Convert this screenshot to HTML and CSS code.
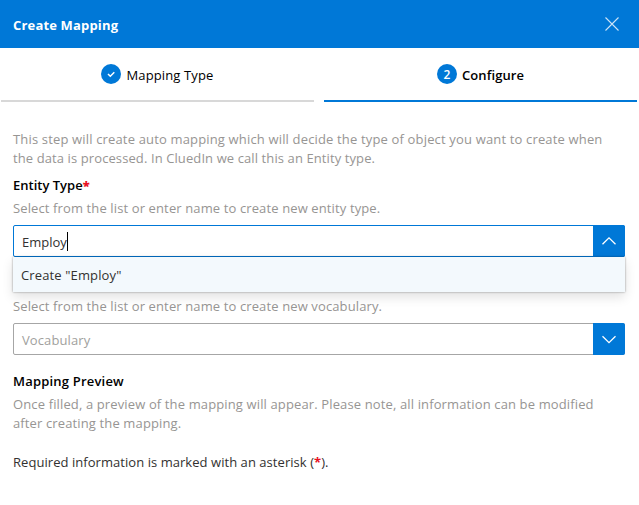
FILE: index.html
```html
<!DOCTYPE html>
<html lang="en">
<head>
<meta charset="utf-8">
<title>Create Mapping</title>
<link rel="stylesheet" href="styles.css">
</head>
<body>
<header class="header">
  <h1 class="title">Create Mapping</h1>
  <svg class="close" width="16" height="16" viewBox="0 0 16 16"><path d="M1.5 1.5l13 13M14.5 1.5l-13 13"/></svg>
</header>
<nav class="steps">
  <div class="step">
    <span class="badge"><svg width="20" height="20" viewBox="0 0 20 20"><path d="M7 10l2.3 2.3L13.300 8.300"/></svg></span>
    <span class="step-one">Mapping Type</span>
  </div>
  <div class="step active">
    <span class="badge">2</span>
    <span class="step-two">Configure</span>
  </div>
</nav>
<main class="content">
  <p class="hint intro"><span class="i1">This step will create auto mapping which will decide the type of object you want to create when</span><br><span class="i2">the data is processed. In CluedIn we call this an Entity type.</span></p>
  <section class="field entity">
    <h2 class="label">Entity Type<b class="star">*</b></h2>
    <p class="hint"><span class="sel">Select from the list or enter name to create new entity type.</span></p>
    <div class="combo open">
      <div class="input"><span class="typed">Employ</span><i class="caret"></i></div>
      <div class="toggle"><svg width="16" height="16" viewBox="0 0 16 16"><path d="M1.500 11.300L8 4.800l6.500 6.500"/></svg></div>
      <div class="menu"><span class="option">Create "Employ"</span></div>
    </div>
  </section>
  <section class="field vocabulary">
    <p class="hint"><span class="sel">Select from the list or enter name to create new vocabulary.</span></p>
    <div class="combo">
      <div class="input"><span class="placeholder">Vocabulary</span></div>
      <div class="toggle"><svg width="16" height="16" viewBox="0 0 16 16"><path d="M1.500 5.200L8 11.700l6.500-6.500"/></svg></div>
    </div>
  </section>
  <section class="preview">
    <h2 class="label preview-label">Mapping Preview</h2>
    <p class="hint"><span class="o1">Once filled, a preview of the mapping will appear. Please note, all information can be modified</span><br><span class="o2">after creating the mapping.</span></p>
  </section>
  <p class="required">Required information is marked with an asterisk (<b class="star">*</b>).</p>
</main>
</body>
</html>
```

FILE: styles.css
```css
* { box-sizing: border-box; }
body {
  margin: 0;
  background: #fff;
  color: #323130;
  font: 13px/19px "Open Sans", "Noto Sans", sans-serif;
  white-space: nowrap;
}
h1, h2, p { margin: 0; font-size: 13px; }
svg { display: block; fill: none; stroke: #fff; stroke-width: 1.3; }
.header {
  display: flex;
  align-items: center;
  justify-content: space-between;
  height: 48px;
  padding: 0 19px 0 13px;
  background: #0078d7;
}
.title { padding-top: 2px; color: #fff; font-weight: 700; letter-spacing: .17px; }
.close { stroke-width: 1.1; opacity: .8; }
.steps { display: flex; gap: 10px; padding: 0 2px 0 1px; }
.step {
  display: flex;
  align-items: flex-start;
  justify-content: center;
  gap: 5px;
  width: 313px;
  height: 54px;
  padding-top: 16px;
  border-bottom: 2px solid #d8d8d8;
  color: #000;
}
.step.active { border-color: #0078d7; font-weight: 600; }
.step > span:last-child { padding-top: 2px; }
.step-one { letter-spacing: .14px; }
.step-two { letter-spacing: .08px; }
.badge {
  width: 20px;
  height: 20px;
  border-radius: 50%;
  background: #0078d7;
  color: #fff;
  font-size: 12px;
  line-height: 22px;
  text-align: center;
}
.badge svg { stroke-width: 1.5; }
.content { padding: 28px 14px 0 13px; }
.hint { color: #979593; }
.i1 { letter-spacing: .16px; }
.i2 { letter-spacing: .1px; }
.sel { letter-spacing: .12px; }
.o1 { letter-spacing: .13px; }
.o2 { letter-spacing: .13px; }
.label { color: #000; font-weight: 600; }
.preview-label { letter-spacing: .2px; }
.star { color: #e81123; }
.entity { margin-top: 8px; }
.entity .hint { margin-top: 4px; }
.combo {
  position: relative;
  display: flex;
  height: 32px;
  margin-top: 7px;
  border: 1px solid #a6a6a6;
  border-radius: 2px;
}
.combo.open { border-color: #0078d7; }
.input { display: flex; flex: 1; align-items: center; padding: 3px 0 0 8px; }
.caret { width: 1px; height: 19px; margin-top: -2px; background: #000; }
.placeholder { color: #a19f9d; letter-spacing: .1px; }
.toggle {
  display: flex;
  align-items: center;
  justify-content: center;
  width: 32px;
  margin: -1px;
  border-radius: 0 2px 2px 0;
  background: #0078d7;
}
.menu {
  position: absolute;
  top: 31px;
  left: -1px;
  right: -1px;
  height: 35px;
  padding: 9px 8px;
  background: #f3f9fd;
  box-shadow: 0 0 2px rgba(0, 0, 0, .4), 0 5px 12px rgba(0, 0, 0, .12);
}
.option { letter-spacing: .13px; }
.vocabulary { margin-top: 40px; }
.preview { margin-top: 17px; }
.preview .hint { margin-top: 4px; }
.required { margin-top: 20px; letter-spacing: .05px; }
```
